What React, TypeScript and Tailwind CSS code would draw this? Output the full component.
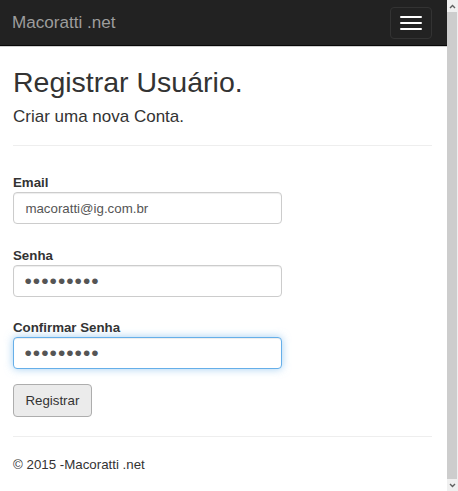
const inputBase =
  "block w-[269px] h-[32.3px] px-[11.4px] rounded-[4px] border bg-white text-[13.3px] text-[#555] outline-none";

const Field = ({
  label,
  value,
  dots,
  focused,
}: {
  label: string;
  value: string;
  dots?: boolean;
  focused?: boolean;
}) => (
  <div className="flex flex-col">
    <label className="block text-[13.3px] leading-[19px] font-bold">{label}</label>
    <input
      type="text"
      readOnly
      value={value}
      className={`${inputBase} ${
        focused
          ? "border-[#66afe9] shadow-[inset_0_1px_1px_rgba(0,0,0,0.075),0_0_8px_rgba(102,175,233,0.6)]"
          : "border-[#ccc] shadow-[inset_0_1px_1px_rgba(0,0,0,0.075)]"
      } ${dots ? "text-[21px] tracking-[1px] pl-[10.5px]" : ""}`}
    />
  </div>
);

const App = () => {
  return (
    <div className="flex h-[491px] w-[458px] overflow-hidden bg-white font-['Liberation_Sans',Arial,sans-serif] text-[#333]">
      <div className="flex-1 min-w-0 flex flex-col">
        {/* Navbar */}
        <div className="h-[46px] bg-[#222] border-b border-[#080808] flex items-center justify-between pl-[12px] pr-[15px]">
          <span className="text-[17.1px] text-[#9d9d9d]">Macoratti .net</span>
          <button className="w-[42px] h-[32px] border border-[#333] rounded-[4px] flex flex-col items-center justify-center gap-[4px]">
            <span className="block w-[22px] h-[2px] bg-white rounded-[1px]"></span>
            <span className="block w-[22px] h-[2px] bg-white rounded-[1px]"></span>
            <span className="block w-[22px] h-[2px] bg-white rounded-[1px]"></span>
          </button>
        </div>
        <div className="h-px bg-[#d0d0d0]"></div>

        {/* Content */}
        <div className="pl-[13px] pr-[15px] flex flex-col">
          <h2 className="mt-[20px] text-[28.5px] leading-[31px] font-normal">Registrar Usuário.</h2>
          <h4 className="mt-[9.5px] text-[17px] leading-[18.7px] font-normal">Criar uma nova Conta.</h4>
          <hr className="mt-[19px] border-t border-[#eee]" />

          <form className="mt-[26.8px] flex flex-col gap-[21.3px]">
            <Field label="Email" value="macoratti@ig.com.br" />
            <Field label="Senha" value="•••••••••" dots />
            <Field label="Confirmar Senha" value="•••••••••" dots focused />
          </form>

          <div className="mt-[14.9px]">
            <button className="h-[32.3px] px-[11.4px] rounded-[4px] border border-[#adadad] bg-[#ebebeb] text-[13.3px] text-[#333]">
              Registrar
            </button>
          </div>

          <hr className="mt-[19.3px] border-t border-[#eee]" />
          <footer className="mt-[18px] text-[13.3px] leading-[19px]">© 2015 -Macoratti .net</footer>
        </div>
      </div>

      {/* Scrollbar */}
      <div className="w-[11px] h-full flex flex-col bg-[#f0f0f0]">
        <div className="h-[12px] flex items-center justify-center">
          <svg width="7" height="5" viewBox="0 0 7 5">
            <polyline points="1,4 3.5,1.5 6,4" fill="none" stroke="#606060" strokeWidth="1.4" />
          </svg>
        </div>
        <div className="flex-1 w-[10px] bg-[#cdcdcd]"></div>
        <div className="h-[12px] flex items-center justify-center">
          <svg width="7" height="5" viewBox="0 0 7 5">
            <polyline points="1,1 3.5,3.5 6,1" fill="none" stroke="#606060" strokeWidth="1.4" />
          </svg>
        </div>
      </div>
    </div>
  );
};

export default App;
